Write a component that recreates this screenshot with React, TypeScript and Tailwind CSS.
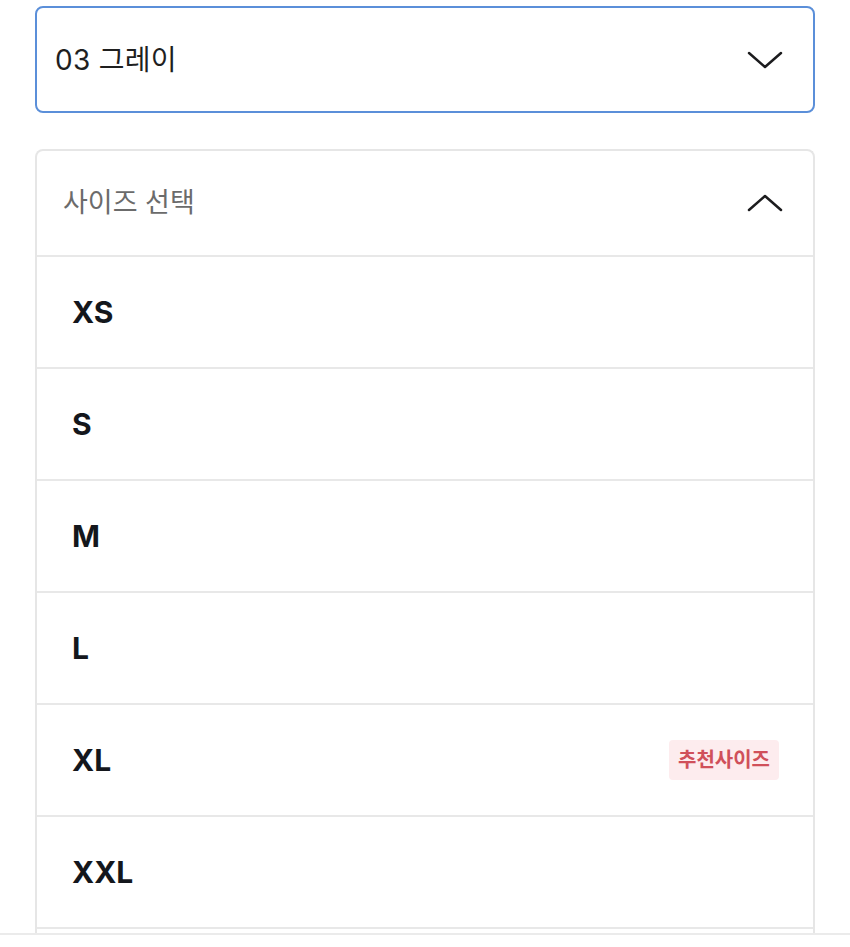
import React from 'react';

const sizes = ['XS', 'S', 'M', 'L', 'XL', 'XXL'];

function Chevron({ up }: { up?: boolean }) {
  return (
    <svg width="36" height="18" viewBox="0 0 36 18" fill="none" className="shrink-0">
      <polyline
        points={up ? '2,16 18,2 34,16' : '2,2 18,16 34,2'}
        stroke="#1c1c1e"
        strokeWidth="2.5"
        strokeLinecap="round"
        strokeLinejoin="round"
      />
    </svg>
  );
}

export default function App() {
  return (
    <div
      className="w-[850px] h-[947px] overflow-hidden bg-white flex flex-col"
      style={{ fontFamily: 'Inter, "Noto Sans CJK KR", sans-serif' }}
    >
      <div className="h-[933px] shrink-0 overflow-hidden px-[35px] pt-[6px]">
        {/* 색상 선택 */}
        <div className="h-[107px] border-2 border-[#5b8fd9] rounded-lg flex items-center justify-between pl-[18px] pr-[30px]">
          <span className="text-[28px] text-[#1f1f1f] tracking-[0.3px]">03 그레이</span>
          <Chevron />
        </div>

        {/* 사이즈 목록 */}
        <div className="mt-[36px] border-2 border-b-0 border-[#e6e6e6] rounded-t-lg">
          <div className="h-[104px] flex items-center justify-between pl-[26px] pr-[30px]">
            <span className="text-[27px] text-[#6b6b6b]">사이즈 선택</span>
            <Chevron up />
          </div>
          {sizes.map((s) => (
            <div
              key={s}
              className="h-[112px] border-t-2 border-[#e8e8e8] flex items-center justify-between pl-[35px] pr-[34px]"
            >
              <span className="text-[30px] font-bold text-[#14171c]">{s}</span>
              {s === 'XL' && (
                <span className="bg-[#fdecee] text-[#d0505a] text-[20px] font-semibold px-[9px] py-[5px] rounded">
                  추천사이즈
                </span>
              )}
            </div>
          ))}
          <div className="h-[40px] border-t-2 border-[#e8e8e8]" />
        </div>
      </div>
      <div className="flex-1 border-t-2 border-[#ebebeb]" />
    </div>
  );
}
